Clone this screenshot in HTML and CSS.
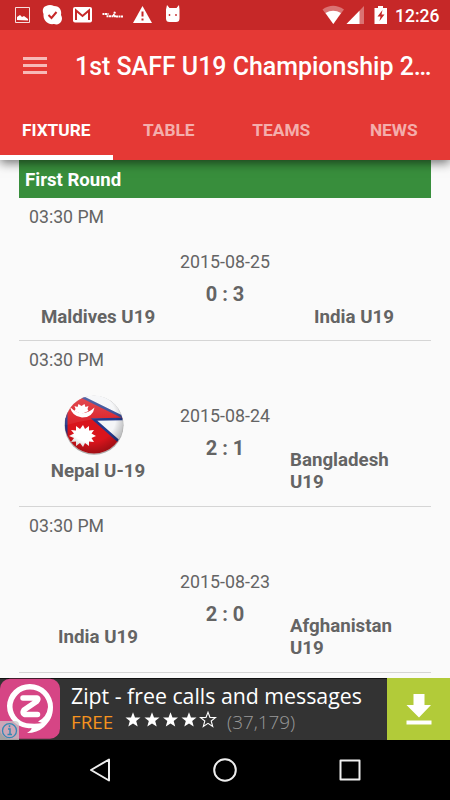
FILE: index.html
```
<!DOCTYPE html>
<html lang="en">
<head>
<meta charset="utf-8">
<title>Fixtures</title>
<link rel="stylesheet" href="styles.css">
</head>
<body>
<div class="screen">
  <div class="status">
    <svg class="status-icons" width="190" height="30" viewBox="0 0 190 30">
      <path d="M15.500 7.500h14v15h-14z" fill="none" stroke="#fff" stroke-opacity=".85"/>
      <path d="M17 20v-3l3-2 2 2 2-1 4 3v1.500z" fill="#fff"/>
      <path d="M46 6Q50 4 54 6C60 6 62 11 61 15C64 20 60 26 54 24C47 25 43 20 43.500 14C42 10 43 7 46 6z" fill="#fff"/>
      <path d="M48.500 15l3 3 5-6" fill="none" stroke="#c62828" stroke-width="2"/>
      <rect x="73" y="7" width="19" height="15.500" rx="2" fill="#fff"/>
      <path d="M76 20V10.500l6.500 5.500 6.500-5.500V20" fill="none" stroke="#c62828" stroke-width="2"/>
      <path d="M102.500 14h6M106.500 16.200h10M113.500 16l1.500-4.500M116 16.500h7" fill="none" stroke="#fff" stroke-width="2" stroke-dasharray="2 .5"/>
      <path d="M142.500 6L152 23H133z" fill="#fff"/>
      <path d="M142.500 11.500v5M142.500 18.500v2" stroke="#c62828" stroke-width="2"/>
      <path d="M167 5l2.500 3h7l2.500-3 .5 4.500v9q0 3.500-3.500 3.500h-6.500q-3.500 0-3.500-3.500v-9z" fill="#fff"/>
      <circle cx="169.500" cy="15" r=".9" fill="#c62828"/><circle cx="176" cy="15" r=".9" fill="#c62828"/>
    </svg>
    <svg class="signal-icons" width="68" height="30" viewBox="0 0 68 30">
      <path d="M1.500 9.500Q12 2 23 9.500L12.300 24z" fill="#fff" opacity=".35"/>
      <path d="M4.500 13Q12 8.500 20 13L12.300 24z" fill="#fff"/>
      <path d="M43 6v18H25.500z" fill="#fff" opacity=".35"/>
      <path d="M38.500 10.700V24h-13z" fill="#fff"/>
      <path d="M53.500 8h3.500V6h5v2h4v16H53.500z" fill="#fff"/>
      <path d="M61.500 10l-5 6.500h3L58.500 21l5-6.500h-3z" fill="#c62828"/>
    </svg>
    <span class="clock">12:26</span>
  </div>
  <header class="appbar">
    <div class="toolbar">
      <div class="menu"><i></i><i></i><i></i></div>
      <h1 class="title">1st SAFF U19 Championship 2…</h1>
    </div>
    <nav class="tabs">
      <a class="tab active">FIXTURE</a><a class="tab">TABLE</a><a class="tab">TEAMS</a><a class="tab">NEWS</a>
    </nav>
  </header>
  <main class="list">
    <h2 class="round">First Round</h2>
    <section class="match first">
      <div class="time">03:30 PM</div>
      <div class="body">
        <div class="team"><div class="logo"></div><div class="name"><span>Maldives U19</span></div></div>
        <div class="result"><div class="date">2015-08-25</div><div class="score">0 : 3</div></div>
        <div class="team"><div class="logo"></div><div class="name"><span>India U19</span></div></div>
      </div>
    </section>
    <section class="match">
      <div class="time">03:30 PM</div>
      <div class="body">
        <div class="team"><div class="logo">
          <svg class="flag" width="62" height="62" viewBox="0 0 62 62">
            <defs>
              <clipPath id="disc"><circle cx="31" cy="30.500" r="29"/></clipPath>
              <radialGradient id="shade" cx=".45" cy=".38" r=".65"><stop offset=".65" stop-opacity="0"/><stop offset="1" stop-opacity=".3"/></radialGradient>
              <linearGradient id="gloss" x2="0" y2="1"><stop stop-color="#fff" stop-opacity=".25"/><stop offset="1" stop-color="#fff" stop-opacity=".05"/></linearGradient>
            </defs>
            <circle cx="31" cy="31.300" r="29.500" fill="#777" opacity=".6"/>
            <g clip-path="url(#disc)">
              <path d="M0 0h62v62H0z" fill="#f4f5f7"/>
              <path d="M3-5L64 25 31 25.500 64 54.500 60 70H0z" fill="#d9141c" stroke="#233a8c" stroke-width="2.500"/>
              <path d="M0 0h4.500v62H0z" fill="#233a8c"/>
              <path d="M7 13Q19 25 31.500 13.500Q30 23.500 19 23.500Q9 22.500 7 13z" fill="#fff"/>
              <path d="M11.500 17l1-2-1-3 3 1 1-3 3 2 3-2 1 3 3-1-1 3 1 2-7 3z" fill="#fff"/>
              <polygon fill="#fff" points="20,31 22,35 26,32 26,36.500 31,36 28.500,39.500 33,42 28.500,44 31,48 26,47.500 26,52 22,49 20,53 17,49 13,52 13,47.500 8,48 11,44 6,42 11,39.500 8,36 13,36.500 13,32 17,35"/>
              <path d="M0 0h62v24Q32 22 0 32z" fill="url(#gloss)"/>
            </g>
            <circle cx="31" cy="30.500" r="29" fill="url(#shade)"/>
          </svg>
        </div><div class="name"><span>Nepal U-19</span></div></div>
        <div class="result"><div class="date">2015-08-24</div><div class="score">2 : 1</div></div>
        <div class="team"><div class="logo"></div><div class="name"><span>Bangladesh U19</span></div></div>
      </div>
    </section>
    <section class="match">
      <div class="time">03:30 PM</div>
      <div class="body">
        <div class="team"><div class="logo"></div><div class="name"><span>India U19</span></div></div>
        <div class="result"><div class="date">2015-08-23</div><div class="score">2 : 0</div></div>
        <div class="team"><div class="logo"></div><div class="name"><span>Afghanistan U19</span></div></div>
      </div>
    </section>
  </main>
  <aside class="ad">
    <svg class="ad-logo" width="62" height="62" viewBox="0 0 62 62">
      <rect y=".8" width="60" height="60" rx="10" fill="#d64585"/>
      <path fill-rule="evenodd" d="M30 6A23 23 0 0 1 53 29C53 38 50 43 44 49Q37 55 27 55Q32 52 31.500 50A22 22 0 0 1 7 28A22.500 22.500 0 0 1 30 6zM30 11.500A17.500 17.500 0 0 0 12.500 29A17.500 17.500 0 0 0 30 45.500Q37 46 42 45Q40 44 38 43.500Q47 39 48 29A18 18 0 0 0 30 11.500z" fill="#fff"/>
      <path d="M23 20h14q2 1-.5 3.500L24 32q-2 3 .5 4.500h13" fill="none" stroke="#fff" stroke-width="5.500" stroke-linecap="round" stroke-linejoin="round"/>
      <path d="M0 43h15q4 0 4 4v15H0z" fill="#c8c8c8" opacity=".75"/>
      <circle cx="9.500" cy="52.700" r="7" fill="none" stroke="#3689b4" stroke-width="1.300"/>
      <path d="M8 51h2v5.500M7.500 56.500h4.500M9.500 47.300v2" fill="none" stroke="#3689b4" stroke-width="1.500"/>
    </svg>
    <div class="ad-text">
      <div class="ad-title">Zipt - free calls and messages</div>
      <div class="ad-meta"><span class="free">FREE</span>
        <svg class="stars" width="92" height="18" viewBox="0 0 92 18">
          <defs><path id="star" d="M0-7.800L2-2.600 7.500-2.400 3.200 1 4.700 6.500 0 3.400-4.700 6.500-3.200 1-7.500-2.400-2-2.600z"/></defs>
          <g fill="#fff"><use href="#star" x="8" y="9"/><use href="#star" x="27" y="9"/><use href="#star" x="45.500" y="9"/><use href="#star" x="64" y="9"/></g>
          <use href="#star" x="83" y="9" fill="none" stroke="#fff" stroke-width="1.100"/>
        </svg>
        <span class="count">(37,179)</span></div>
    </div>
    <div class="download">
      <svg width="26" height="32" viewBox="0 0 26 32"><path d="M7.500 1h11v11H25L13 24.500.5 12h7zM.500 27.500H25.500V31.500H.500z" fill="#fff"/></svg>
    </div>
  </aside>
  <footer class="navbar">
    <svg width="450" height="60" viewBox="0 0 450 60" fill="none" stroke="#eee" stroke-width="2" stroke-linejoin="round">
      <path d="M109 19.500v21L91 30z"/><circle cx="225" cy="30" r="10.800"/><rect x="340.500" y="20.500" width="19" height="19"/>
    </svg>
  </footer>
</div>
</body>
</html>
```
FILE: styles.css
```
* { box-sizing: border-box; }
body { margin: 0; font-family: Roboto, sans-serif; background: #fafafa; }
.screen { width: 450px; height: 800px; display: flex; flex-direction: column; overflow: hidden; }
.status { height: 30px; flex: none; background: #c62828; display: flex; align-items: center; color: #fff; position: relative; z-index: 2; }
.status-icons { flex: none; }
.signal-icons { flex: none; margin-left: 131px; }
.clock { margin-left: 6px; padding-top: 1px; font-size: 17.5px; font-weight: 500; line-height: 30px; white-space: nowrap; }
.appbar { height: 130px; flex: none; background: #e53935; box-shadow: 0 3px 10px rgba(0,0,0,.55); position: relative; z-index: 1; display: flex; flex-direction: column; }
.toolbar { height: 73px; display: flex; align-items: center; padding: 0 0 2px 23px; }
.menu { width: 24px; display: flex; flex-direction: column; gap: 4.5px; margin-right: 28px; }
.menu i { height: 2.5px; background: #f7b9b7; }
.title { margin: 0; padding-top: 2px; color: #fff; font-size: 24.95px; font-weight: 500; white-space: nowrap; }
.tabs { flex: 1; display: grid; grid-template-columns: repeat(4, 112.5px); }
.tab { display: flex; align-items: center; justify-content: center; color: rgba(255,255,255,.6); font-size: 17.3px; font-weight: 700; border-bottom: 5px solid transparent; padding-top: 2px; }
.tab.active { color: #fff; border-color: #fff; }
.list { height: 518px; flex: none; padding: 0 19px; overflow: hidden; }
.round { margin: 0; height: 38px; line-height: 41px; padding-left: 6px; background: #388e3c; color: #fff; font-size: 18.6px; font-weight: 700; }
.match { border-bottom: 1px solid #d5d5d5; color: #646464; padding-bottom: 13px; }
.match.first { padding-bottom: 12px; }
.time { height: 42px; line-height: 38px; padding-left: 10px; font-size: 17.7px; }
.body { display: grid; grid-template-columns: 129px 127px 129px; padding-left: 14px; align-items: center; }
.logo { height: 66px; display: flex; justify-content: center; }
.flag { margin: 0 7px 0 0; }
.name { display: flex; justify-content: center; font-size: 18.7px; font-weight: 700; line-height: 22px; padding-left: 1px; }
.result { text-align: center; padding: 0 1px 12px 0; line-height: 32px; }
.date { font-size: 17.8px; }
.score { font-size: 20px; font-weight: 700; }
.ad { height: 62px; flex: none; display: flex; background: #333; border-top: 1px solid #111; font-family: "Open Sans", sans-serif; }
.ad-logo { flex: none; margin-top: -1px; }
.ad-text { width: 325px; padding-left: 9px; white-space: nowrap; }
.ad-title { color: #fff; font-size: 21.3px; line-height: 34px; height: 29px; }
.ad-meta { display: flex; align-items: center; line-height: 28px; height: 28px; }
.free { color: #f7931e; font-size: 18.8px; width: 54px; }
.stars { flex: none; margin-top: -4px; }
.count { color: #999; font-size: 18.9px; font-weight: 300; margin-left: 10px; }
.download { flex: 1; margin-top: -1px; background: #b2cb39; display: flex; align-items: center; justify-content: center; }
.navbar { height: 60px; flex: none; background: #000; }
.navbar svg { display: block; }
```
